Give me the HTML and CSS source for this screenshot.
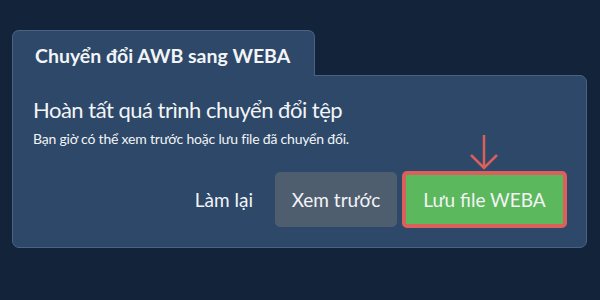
FILE: index.html
```html
<!DOCTYPE html>
<html lang="vi">
<head>
    <meta charset="UTF-8">
    <meta name="viewport" content="width=device-width, initial-scale=1.0">
    <title>Chuyển đổi AWB sang WEBA</title>
    <link rel="stylesheet" href="styles.css">
</head>
<body>
    <div class="converter">
        <div class="converter-tab">
            <h2>Chuyển đổi AWB sang WEBA</h2>
        </div>
        <div class="converter-panel">
            <h1 class="panel-title">Hoàn tất quá trình chuyển đổi tệp</h1>
            <p class="panel-text">Bạn giờ có thể xem trước hoặc lưu file đã chuyển đổi.</p>
            <div class="actions">
                <button class="btn btn-link">Làm lại</button>
                <button class="btn btn-secondary">Xem trước</button>
                <div class="save-wrap">
                    <svg class="hint-arrow" viewBox="0 0 30 36">
                        <path d="M15 1V34M2 21L15 34L28 21"/>
                    </svg>
                    <button class="btn btn-save">Lưu file WEBA</button>
                </div>
            </div>
        </div>
    </div>
</body>
</html>
```

FILE: styles.css
```css
:root {
    --page-background: #13233a;
    --panel-color: #2d4868;
    --panel-border: #4a6382;
    --text-color: #f2f4f7;
    --secondary-button: #4f5e6f;
    --success-color: #5cb85c;
    --highlight-color: #db5f5a;
}

* {
    margin: 0;
    padding: 0;
    box-sizing: border-box;
}

body {
    background-color: var(--page-background);
    font-family: Lato, 'Open Sans', Arial, sans-serif;
    color: var(--text-color);
    height: 100vh;
}

.converter {
    padding: 30px 13px 0 12px;
}

.converter-tab {
    display: inline-block;
    position: relative;
    z-index: 1;
    width: 303px;
    background-color: var(--panel-color);
    border: 1px solid var(--panel-border);
    border-bottom: none;
    border-radius: 7px 7px 0 0;
    padding: 13px 22px 9px;
    margin-bottom: -1px;
}

.converter-tab h2 {
    font-size: 19.5px;
    font-weight: 700;
    white-space: nowrap;
}

.converter-panel {
    background-color: var(--panel-color);
    border: 1px solid var(--panel-border);
    border-radius: 0 7px 7px 7px;
    padding: 20px 19px 19px 20px;
}

.panel-title {
    font-size: 22px;
    font-weight: 400;
    letter-spacing: -0.5px;
}

.panel-text {
    font-size: 14px;
    letter-spacing: -0.2px;
    margin-top: 7px;
}

.actions {
    display: flex;
    justify-content: flex-end;
    align-items: center;
    gap: 5px;
    margin-top: 24px;
}

.btn {
    font-family: inherit;
    font-size: 19px;
    color: var(--text-color);
    border: none;
    border-radius: 5px;
    height: 55px;
    padding: 0 14px;
    cursor: pointer;
}

.btn-link {
    background: transparent;
    padding: 0 17px;
}

.btn-secondary {
    background-color: var(--secondary-button);
    width: 122px;
}

.save-wrap {
    position: relative;
}

.btn-save {
    display: block;
    background-color: var(--success-color);
    border: 4px solid var(--highlight-color);
    height: 57px;
    width: 165px;
}

.hint-arrow {
    position: absolute;
    left: 67px;
    top: -37px;
    width: 30px;
    height: 36px;
    fill: none;
    stroke: var(--highlight-color);
    stroke-width: 2.5;
}
```
